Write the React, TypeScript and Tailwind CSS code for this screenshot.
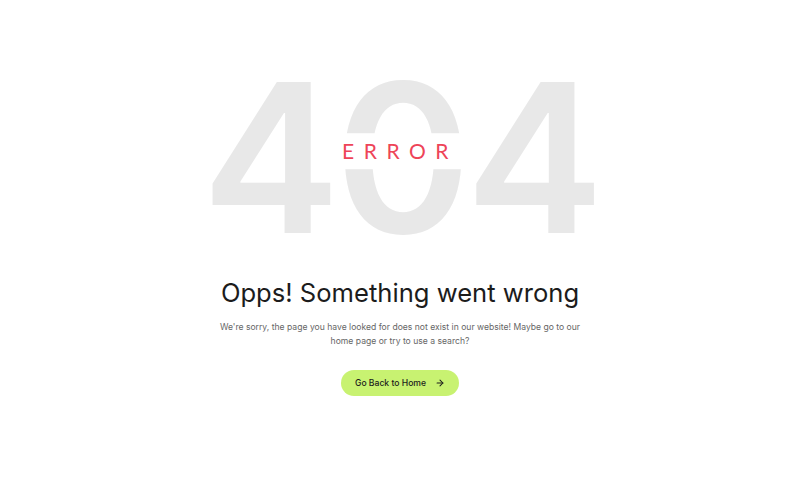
import { ArrowRight } from 'lucide-react';

export default function App() {
  return (
    <div className="min-h-screen w-full bg-white flex flex-col items-center font-['Inter',sans-serif]">
      <div className="relative mt-[53px] flex items-center justify-center">
        <h1 className="text-[208px] leading-none font-semibold tracking-[-6px] text-[#e8e8e8] select-none">404</h1>
        <span className="absolute left-1/2 top-1/2 -translate-x-1/2 -translate-y-[66%] bg-white px-2 py-2 text-[21px] leading-5 tracking-[9.5px] text-[#ee4458] font-['Lato',sans-serif]">
          ERROR
        </span>
      </div>
      <h2 className="mt-[14px] text-[25.6px] leading-9 text-[#1c1c1c]">Opps! Something went wrong</h2>
      <p className="mt-[9px] w-[370px] text-center text-[8.6px] leading-[14px] text-[#666666]">
        We're sorry, the page you have looked for does not exist in our website! Maybe go to our home page or try to use a search?
      </p>
      <button className="mt-[22px] flex items-center gap-[9px] rounded-full bg-[#c8f271] px-[14px] h-[26px] text-[8.6px] font-medium text-[#1c1c1c]">
        Go Back to Home
        <ArrowRight className="h-[10px] w-[10px]" strokeWidth={2.5} />
      </button>
    </div>
  );
}
